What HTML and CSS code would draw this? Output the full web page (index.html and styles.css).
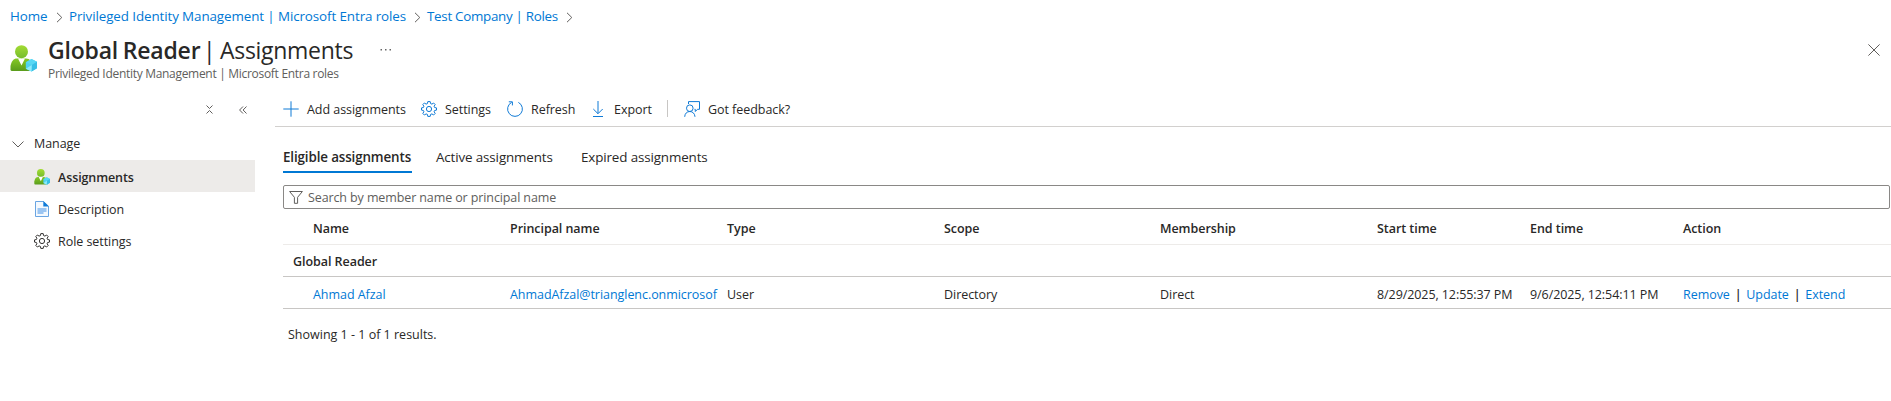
FILE: index.html
```
<!DOCTYPE html>
<html lang="en">
<head>
<meta charset="utf-8">
<title>Global Reader | Assignments</title>
<link rel="stylesheet" href="styles.css">
</head>
<body>
<svg class="defs" aria-hidden="true">
  <defs>
    <linearGradient id="green" x1="0" y1="0" x2="0" y2="1"><stop offset="0" stop-color="#86c926"/><stop offset="1" stop-color="#5a9c1c"/></linearGradient>
    <linearGradient id="head" x1="0" y1="0" x2="0" y2="1"><stop offset="0" stop-color="#a3dc33"/><stop offset="1" stop-color="#76bc2d"/></linearGradient>
    <symbol id="person" viewBox="0 0 27 27">
      <path d="M.5 24.500V21C1.500 16 3.500 13.500 7 13.500H16C20 13.500 22 17 22.500 21V26H2Q.5 26 .5 24.500Z" fill="url(#green)"/>
      <path d="M8 13.500L11.500 20.500L15 13.500Z" fill="#fff"/>
      <circle cx="11.500" cy="6.700" r="6.500" fill="url(#head)"/>
      <path d="M21.500 14L27 16.800V23.200L21.500 26.600L15.800 23.800V17.200Z" fill="#4fd2f0"/>
      <path d="M21.500 14L27 16.800L21.800 20L15.800 17.200Z" fill="#58d8f4"/>
      <path d="M21.800 20L27 16.800V23.200L21.500 26.600Z" fill="#38bfe6"/>
      <path d="M15.800 23.800L21.800 20L21.500 26.600Z" fill="#8debfb"/>
    </symbol>
    <symbol id="gear" viewBox="0 0 16 16">
      <path d="M6.800 .6H9.200L9.600 2.600L10.900 3.100L12.600 2L14.200 3.600L13.100 5.200L13.600 6.500L15.500 6.900V9.100L13.600 9.500L13.100 10.800L14.200 12.400L12.600 14L10.900 12.900L9.600 13.400L9.200 15.400H6.800L6.400 13.400L5.100 12.900L3.400 14L1.800 12.400L2.900 10.800L2.400 9.500L.5 9.100V6.900L2.400 6.500L2.900 5.200L1.800 3.600L3.400 2L5.100 3.100L6.400 2.600Z"/>
      <circle cx="8" cy="8" r="2.600"/>
    </symbol>
    <symbol id="sep" viewBox="0 0 7 11"><path d="M1 .8L5.800 5.500L1 10.200"/></symbol>
  </defs>
</svg>

<nav class="crumbs">
  <a class="c1">Home</a><svg class="sep line"><use href="#sep"/></svg>
  <a class="c2">Privileged Identity Management | Microsoft Entra roles</a><svg class="sep line"><use href="#sep"/></svg>
  <a class="c3">Test Company | Roles</a><svg class="sep line"><use href="#sep"/></svg>
</nav>

<header class="head">
  <svg class="head-icon"><use href="#person"/></svg>
  <div class="head-text">
    <h1><b>Global Reader</b><span>| Assignments</span></h1>
    <p>Privileged Identity Management | Microsoft Entra roles</p>
  </div>
  <svg class="more" viewBox="0 0 12 2"><path d="M.5 0H2V1.500H.5ZM5 0H6.500V1.500H5ZM9.500 0H11V1.500H9.500Z" fill="#666"/></svg>
  <svg class="close line" viewBox="0 0 12 12"><path d="M.4 .4L11.600 11.600M11.600 .4L.4 11.600"/></svg>
</header>

<div class="body">
  <aside class="side">
    <div class="side-tools">
      <svg class="fold line" viewBox="0 0 7 9"><path d="M.5 .5L3.500 3.500L6.500 .5M.5 8.500L3.500 5.500L6.500 8.500"/></svg>
      <svg class="hide line" viewBox="0 0 8 8"><path d="M4 .5L.6 4L4 7.500M7.500 .5L4.100 4L7.500 7.500"/></svg>
    </div>
    <div class="group"><svg class="chev line" viewBox="0 0 12 7"><path d="M.5 .5L6 6L11.500 .5"/></svg><span>Manage</span></div>
    <div class="item selected"><svg><use href="#person"/></svg><span>Assignments</span></div>
    <div class="item"><svg viewBox="0 0 16 16"><path d="M1.500 .5H9.500L14.500 5.300V15.500H1.500Z" fill="#f4f9fe" stroke="#6aa5e2"/><path d="M9.300 0L15 5.500H9.300Z" fill="#0f7bd8"/><path d="M3.500 8H12.500M3.500 10H12.500M3.500 12H9.500" stroke="#7db4ee" stroke-width="1.400"/></svg><span>Description</span></div>
    <div class="item"><svg class="line dark"><use href="#gear"/></svg><span>Role settings</span></div>
  </aside>

  <main>
    <div class="toolbar">
      <div class="tool t1"><svg viewBox="0 0 16 16" class="line blue"><path d="M8 .3V15.700M.3 8H15.700"/></svg><span>Add assignments</span></div>
      <div class="tool t2"><svg class="line blue"><use href="#gear"/></svg><span>Settings</span></div>
      <div class="tool t3"><svg viewBox="0 0 16 16" class="line blue"><path d="M4.600 1.400A7.400 7.400 0 1 0 11.400 1.400M1.800 .8H5.400V4.400"/></svg><span>Refresh</span></div>
      <div class="tool t4"><svg viewBox="0 0 16 16" class="line blue"><path d="M8 0V12.500M3.300 8L8 12.700L12.700 8M3 15.500H13"/></svg><span>Export</span></div>
      <i class="rule"></i>
      <div class="tool t5"><svg viewBox="0 0 16 16" class="line blue"><path d="M4.500 3V.6H15.500V8.300H13.500L11.300 10.500V8.300H10.500M.7 15.800C.8 12.500 3 10.500 5.800 10.500S10.800 12.500 11 15.800"/><circle cx="5.800" cy="7.200" r="3.300"/></svg><span>Got feedback?</span></div>
    </div>

    <div class="content">
      <div class="tabs"><span class="tab active">Eligible assignments</span><span class="tab second">Active assignments</span><span class="tab third">Expired assignments</span></div>
      <div class="search"><svg class="line" viewBox="0 0 14 13"><path d="M.6 .5H13.400L8.600 6.300V12.300H5.400V6.300Z"/></svg><span>Search by member name or principal name</span></div>
      <div class="row headrow"><span>Name</span><span>Principal name</span><span>Type</span><span>Scope</span><span>Membership</span><span>Start time</span><span>End time</span><span>Action</span></div>
      <div class="grouprow"><span>Global Reader</span></div>
      <div class="row datarow"><a>Ahmad Afzal</a><a class="mail">AhmadAfzal@trianglenc.onmicrosof</a><span>User</span><span>Directory</span><span>Direct</span><span class="date">8/29/2025, 12:55:37 PM</span><span class="date">9/6/2025, 12:54:11 PM</span><span class="actions"><a>Remove</a><b>|</b><a>Update</a><b>|</b><a>Extend</a></span></div>
      <div class="showing">Showing 1 - 1 of 1 results.</div>
    </div>
  </main>
</div>
</body>
</html>
```
FILE: styles.css
```
* { box-sizing: border-box; }
body { margin: 0; width: 1891px; height: 401px; overflow: hidden; background: #fff; color: #292827; font-family: "Open Sans", "Noto Sans", sans-serif; font-size: 12.5px; line-height: 18px; letter-spacing: -.05px; white-space: nowrap; }
a { color: #0078d4; }
svg { display: block; flex: none; overflow: visible; }
.defs { position: absolute; width: 0; height: 0; }
.line { fill: none; stroke: #605e5c; stroke-width: 1; }
.line.blue { stroke: #0f7ad6; }
.line.dark { stroke: #323130; }

.crumbs { display: flex; align-items: center; height: 32px; padding-left: 10px; font-size: 13.400px; letter-spacing: -.1px; }
.crumbs .sep { width: 7px; height: 11px; margin-top: 2px; }
.crumbs a { margin-right: 9px; }
.crumbs .sep + a { margin-left: 6px; }
.c1 { width: 37px; }
.c2 { width: 336px; }
.c3 { width: 130px; letter-spacing: -.3px; }

.head { display: flex; height: 62px; padding: 0 11px 0 10px; }
.head-icon { width: 27px; height: 27px; margin-top: 13px; }
.head-text { width: 332px; margin-left: 11px; }
h1 { display: flex; margin: 2px 0 0; font-size: 23px; line-height: 32px; font-weight: 400; letter-spacing: -.3px; word-spacing: -1px; }
h1 b { width: 155px; font-weight: 600; letter-spacing: -.2px; }
.head p { margin: -1px 0 0; line-height: 18px; font-size: 12px; letter-spacing: -.3px; color: #605e5c; }
.more { width: 12px; height: 2px; margin-top: 17px; }
.close { width: 12px; height: 12px; margin: 12px 0 0 auto; }

.body { display: flex; }
.side { width: 275px; flex: none; }
.side-tools { display: flex; height: 34px; padding: 11px 0 0 206px; }
.fold { width: 7px; height: 9px; }
.hide { width: 8px; height: 8px; margin: 1px 0 0 26px; }
.group { display: flex; align-items: center; height: 32px; padding-left: 12px; }
.chev { width: 12px; height: 7px; margin-right: 10px; }
.item { display: flex; align-items: center; width: 255px; height: 32px; padding: 2px 0 0 34px; }
.item svg { width: 16px; height: 16px; margin-right: 8px; }
.item span { padding-top: 2px; }
.selected { background: #edebe9; font-weight: 600; letter-spacing: -.1px; }

main { flex: 1; min-width: 0; }
.toolbar { display: flex; align-items: center; height: 33px; padding: 0 0 3px 8px; border-bottom: 1px solid #d2d0ce; }
.tool { display: flex; align-items: center; }
.tool svg { width: 16px; height: 16px; margin-right: 8px; }
.tool span { padding-top: 2px; }
.t1 { width: 138px; }
.t2 { width: 86px; }
.t3 { width: 83px; }
.t4 { width: 77px; }
.rule { width: 1px; height: 17px; background: #c8c6c4; margin-right: 16px; }

.content { padding-left: 8px; }
.tabs { display: flex; height: 58px; padding-top: 16px; font-size: 13.400px; letter-spacing: -.13px; }
.tab { height: 30px; line-height: 28px; }
.active { width: 129px; margin-right: 24px; font-weight: 600; border-bottom: 2px solid #0078d4; }
.second { width: 145px; }
.search { display: flex; align-items: center; height: 24px; width: 1607px; padding-left: 5px; border: 1px solid #8a8886; border-radius: 2px; color: #605e5c; letter-spacing: -.11px; }
.search svg { width: 14px; height: 13px; margin-right: 5px; }
.search span { padding-top: 2px; }
.row { display: grid; grid-template-columns: 197px 217px 217px 216px 217px 153px 153px 1fr; padding: 4px 0 0 30px; align-items: center; }
.headrow { height: 36px; font-weight: 600; border-bottom: 1px solid #edebe9; }
.grouprow { height: 32px; padding: 8px 0 0 10px; font-weight: 600; border-bottom: 1px solid #c8c6c4; }
.datarow { height: 32px; border-bottom: 1px solid #c8c6c4; }
.date { letter-spacing: -.08px; }
.actions { display: flex; }
.actions b { width: 16.500px; text-align: center; font-weight: 600; }
.showing { padding: 17px 0 0 5px; letter-spacing: 0; }
```
